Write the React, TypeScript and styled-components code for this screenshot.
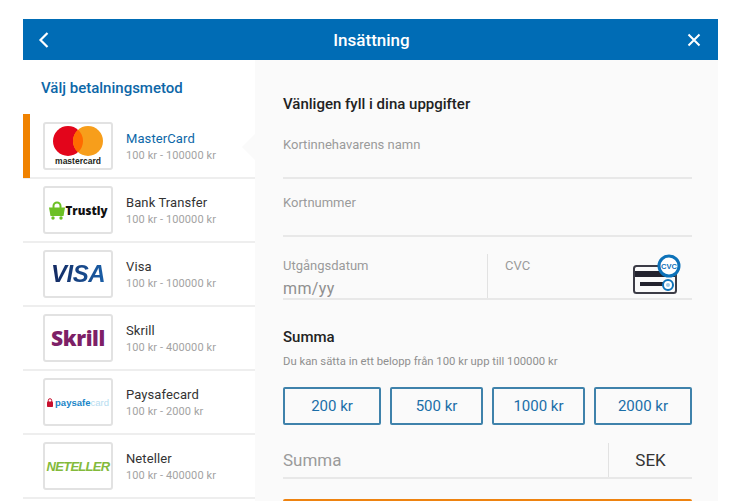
import styled, { createGlobalStyle } from "styled-components";

const GlobalStyle = createGlobalStyle`
  html, body {
    margin: 0;
    height: 501px;
    overflow: hidden;
    background: #fff;
    font-family: Roboto, "Liberation Sans", sans-serif;
  }
`;

const Page = styled.div`
  width: 741px;
  height: 501px;
  padding: 19px 23px 0;
  box-sizing: border-box;
  overflow: hidden;
`;

const Header = styled.header`
  height: 41px;
  background: #006cb5;
  color: #fff;
  display: flex;
  align-items: center;
  justify-content: space-between;
  padding: 0 17px 0 15px;
`;

const Title = styled.h1`
  margin: 0;
  font-size: 17px;
  font-weight: 500;
`;

const Body = styled.div`
  display: flex;
  height: 441px;
`;

const Sidebar = styled.aside`
  width: 232px;
  flex-shrink: 0;
  background: #fff;
`;

const SidebarTitle = styled.h2`
  margin: 0;
  height: 55px;
  padding: 19px 0 0 18px;
  box-sizing: border-box;
  font-size: 15px;
  line-height: 18px;
  font-weight: 500;
  color: #0d67a8;
`;

const Row = styled.div<{ $active?: boolean }>`
  position: relative;
  height: 64px;
  box-sizing: border-box;
  display: flex;
  align-items: center;
  gap: 13px;
  padding-left: 20px;
  border-bottom: 2px solid #eeeeee;
  ${(p) =>
    p.$active &&
    `&::before {
      content: "";
      position: absolute;
      left: 0;
      top: -1px;
      width: 7px;
      height: 64px;
      background: #f08200;
    }`}
`;

const Notch = styled.span`
  position: absolute;
  right: 0;
  top: 19px;
  border-style: solid;
  border-width: 13px 13px 13px 0;
  border-color: transparent #fafafa transparent transparent;
`;

const LogoBox = styled.div`
  width: 70px;
  height: 48px;
  box-sizing: border-box;
  border: 2px solid #e2e2e2;
  border-radius: 3px;
  background: #fff;
  display: flex;
  flex-direction: column;
  align-items: center;
  justify-content: center;
  overflow: hidden;
`;

const MethodText = styled.div`
  margin-top: 3px;
`;

const MethodName = styled.div<{ $active?: boolean }>`
  font-size: 13px;
  line-height: 16px;
  letter-spacing: 0.1px;
  color: ${(p) => (p.$active ? "#0d67a8" : "#333")};
`;

const MethodRange = styled.div`
  font-size: 11px;
  line-height: 17px;
  letter-spacing: 0.1px;
  color: #a3a3a3;
`;

const McWord = styled.span`
  margin-top: 1px;
  font-family: "Liberation Sans", sans-serif;
  font-size: 8.5px;
  line-height: 9px;
  font-weight: 700;
  color: #231f20;
`;

const TrustlyLogo = styled.div`
  display: flex;
  align-items: center;
  gap: 1px;
  font-family: "Open Sans", sans-serif;
  font-size: 11.5px;
  font-weight: 800;
  color: #111;
`;

const VisaWord = styled.span`
  font-family: "Liberation Sans", sans-serif;
  font-size: 24px;
  font-weight: 700;
  font-style: italic;
  letter-spacing: -0.5px;
  background: linear-gradient(90deg, #14285f, #1a5fa8);
  -webkit-background-clip: text;
  background-clip: text;
  color: transparent;
`;

const SkrillWord = styled.span`
  font-family: "Open Sans", sans-serif;
  font-size: 21px;
  font-weight: 800;
  letter-spacing: -0.4px;
  color: #7d2066;
`;

const PaysafeLogo = styled.div`
  display: flex;
  align-items: center;
  gap: 2px;
  font-family: "Liberation Sans", sans-serif;
  font-size: 9.5px;
  font-weight: 700;
  color: #1a85c8;
`;

const PaysafeLight = styled.span`
  font-weight: 400;
  color: #b5dcf0;
`;

const NetellerWord = styled.span`
  font-family: "Liberation Sans", sans-serif;
  font-size: 13px;
  font-weight: 700;
  font-style: italic;
  letter-spacing: -0.7px;
  color: #83ba3b;
`;

const Form = styled.main`
  flex: 1;
  background: #fafafa;
  padding: 35px 26px 0 28px;
`;

const FormTitle = styled.h3`
  margin: 0 0 24px;
  font-size: 15px;
  line-height: 18px;
  font-weight: 500;
  color: #222;
`;

const Field = styled.div`
  height: 40px;
  border-bottom: 2px solid #e8e8e8;
  font-size: 13px;
  line-height: 16px;
  color: #9b9b9b;
  margin-bottom: 16px;
`;

const CardRow = styled.div`
  display: flex;
  height: 44px;
  border-bottom: 2px solid #e8e8e8;
  margin-top: 17px;
`;

const DateCell = styled.div`
  width: 204px;
  padding-top: 4px;
  border-right: 1px solid #e2e2e2;
  font-size: 13px;
  line-height: 16px;
  color: #9b9b9b;
`;

const MonthYear = styled.div`
  font-size: 16px;
  line-height: 20px;
  margin-top: 5px;
  letter-spacing: 0.4px;
  color: #8f8f8f;
`;

const CvcCell = styled.div`
  flex: 1;
  display: flex;
  justify-content: space-between;
  padding: 4px 11px 0 17px;
  font-size: 13px;
  line-height: 16px;
  color: #9b9b9b;
`;

const CvcSvg = styled.svg`
  margin-top: -4px;
`;

const SumTitle = styled.h3`
  margin: 28px 0 0;
  font-size: 15px;
  line-height: 18px;
  font-weight: 500;
  color: #222;
`;

const Hint = styled.p`
  margin: 9px 0 0;
  font-size: 11.3px;
  line-height: 14px;
  color: #8f8f8f;
`;

const Amounts = styled.div`
  display: grid;
  grid-template-columns: 98px 93px 93px 98px;
  gap: 9px;
  margin-top: 18px;
`;

const Amount = styled.button`
  height: 38px;
  padding: 0;
  background: transparent;
  border: 2px solid #3f82ab;
  border-radius: 2px;
  font-family: inherit;
  font-size: 15px;
  color: #1a6ea8;
`;

const SumRow = styled.div`
  display: flex;
  height: 34px;
  margin-top: 18px;
  border-bottom: 2px solid #e8e8e8;
  align-items: center;
`;

const SumInput = styled.div`
  flex: 1;
  height: 100%;
  display: flex;
  align-items: center;
  border-right: 1px solid #e2e2e2;
  font-size: 17px;
  color: #9b9b9b;
`;

const Currency = styled.div`
  width: 83px;
  text-align: center;
  font-size: 17px;
  color: #333;
`;

const Submit = styled.div`
  height: 40px;
  margin-top: 20px;
  background: #ee8310;
  border-radius: 2px 2px 0 0;
`;

const methods = [
  { name: "Bank Transfer", range: "100 kr - 100000 kr", logo: "trustly" },
  { name: "Visa", range: "100 kr - 100000 kr", logo: "visa" },
  { name: "Skrill", range: "100 kr - 400000 kr", logo: "skrill" },
  { name: "Paysafecard", range: "100 kr - 2000 kr", logo: "paysafe" },
  { name: "Neteller", range: "100 kr - 400000 kr", logo: "neteller" },
];

const Logo = ({ kind }: { kind: string }) => {
  if (kind === "trustly")
    return (
      <TrustlyLogo>
        <svg width="16" height="19" viewBox="0 0 16 19">
          <path d="M4.5 7V5a3.5 3.5 0 0 1 7 0v2" fill="none" stroke="#6cc024" strokeWidth="2" />
          <path d="M0 6.5h16l-1.5 8.5h-13z" fill="#6cc024" />
          <circle cx="4" cy="17" r="1.7" fill="#6cc024" />
          <circle cx="12" cy="17" r="1.7" fill="#6cc024" />
        </svg>
        Trustly
      </TrustlyLogo>
    );
  if (kind === "visa") return <VisaWord>VISA</VisaWord>;
  if (kind === "skrill") return <SkrillWord>Skrill</SkrillWord>;
  if (kind === "paysafe")
    return (
      <PaysafeLogo>
        <svg width="6" height="9" viewBox="0 0 6 9">
          <path d="M1.3 4V2.4a1.7 1.7 0 0 1 3.4 0V4" fill="none" stroke="#c8102e" strokeWidth="1" />
          <rect y="3.5" width="6" height="5.5" rx="0.8" fill="#c8102e" />
        </svg>
        <span>
          paysafe<PaysafeLight>card</PaysafeLight>
        </span>
      </PaysafeLogo>
    );
  return <NetellerWord>NETELLER</NetellerWord>;
};

const CvcIcon = () => (
  <CvcSvg width="48" height="42" viewBox="0 0 48 42">
    <rect x="1" y="12" width="42" height="27" rx="2.5" fill="#fafafa" stroke="#3c3c46" strokeWidth="2" />
    <rect x="2" y="17" width="40" height="6" fill="#23232e" />
    <rect x="7" y="28" width="24" height="4" fill="#23232e" />
    <circle cx="35" cy="31" r="5" fill="#fff" stroke="#0d72b9" strokeWidth="2" />
    <circle cx="35" cy="31" r="2" fill="#9cc8e6" />
    <circle cx="36" cy="12" r="10" fill="#fff" stroke="#0d72b9" strokeWidth="3" />
    <text x="36" y="14.5" textAnchor="middle" fontSize="7.5" fontWeight="700" fill="#0d72b9" fontFamily="Liberation Sans, sans-serif">
      CVC
    </text>
  </CvcSvg>
);

export default function App() {
  return (
    <>
      <GlobalStyle />
      <Page>
        <Header>
          <svg width="18" height="16" viewBox="0 0 18 16" fill="none" stroke="#fff" strokeWidth="2.2">
            <path d="M9.5 1 2.5 8l7 7" />
          </svg>
          <Title>Insättning</Title>
          <svg width="14" height="14" viewBox="0 0 14 14" fill="none" stroke="#fff" strokeWidth="2">
            <path d="M1.5 1.5l11 11M12.5 1.5l-11 11" />
          </svg>
        </Header>
        <Body>
          <Sidebar>
            <SidebarTitle>Välj betalningsmetod</SidebarTitle>
            <Row $active>
              <LogoBox>
                <svg width="50" height="30" viewBox="0 0 50 30">
                  <circle cx="15" cy="15" r="15" fill="#e3051b" />
                  <circle cx="35" cy="15" r="15" fill="#f79e1b" />
                  <path d="M25 3.8a15 15 0 0 1 0 22.4a15 15 0 0 1 0-22.4z" fill="#ff6a00" />
                </svg>
                <McWord>mastercard</McWord>
              </LogoBox>
              <MethodText>
                <MethodName $active>MasterCard</MethodName>
                <MethodRange>100 kr - 100000 kr</MethodRange>
              </MethodText>
              <Notch />
            </Row>
            {methods.map((m) => (
              <Row key={m.name}>
                <LogoBox>
                  <Logo kind={m.logo} />
                </LogoBox>
                <MethodText>
                  <MethodName>{m.name}</MethodName>
                  <MethodRange>{m.range}</MethodRange>
                </MethodText>
              </Row>
            ))}
          </Sidebar>
          <Form>
            <FormTitle>Vänligen fyll i dina uppgifter</FormTitle>
            <Field>Kortinnehavarens namn</Field>
            <Field>Kortnummer</Field>
            <CardRow>
              <DateCell>
                Utgångsdatum
                <MonthYear>mm/yy</MonthYear>
              </DateCell>
              <CvcCell>
                CVC
                <CvcIcon />
              </CvcCell>
            </CardRow>
            <SumTitle>Summa</SumTitle>
            <Hint>Du kan sätta in ett belopp från 100 kr upp till 100000 kr</Hint>
            <Amounts>
              <Amount>200 kr</Amount>
              <Amount>500 kr</Amount>
              <Amount>1000 kr</Amount>
              <Amount>2000 kr</Amount>
            </Amounts>
            <SumRow>
              <SumInput>Summa</SumInput>
              <Currency>SEK</Currency>
            </SumRow>
            <Submit />
          </Form>
        </Body>
      </Page>
    </>
  );
}
